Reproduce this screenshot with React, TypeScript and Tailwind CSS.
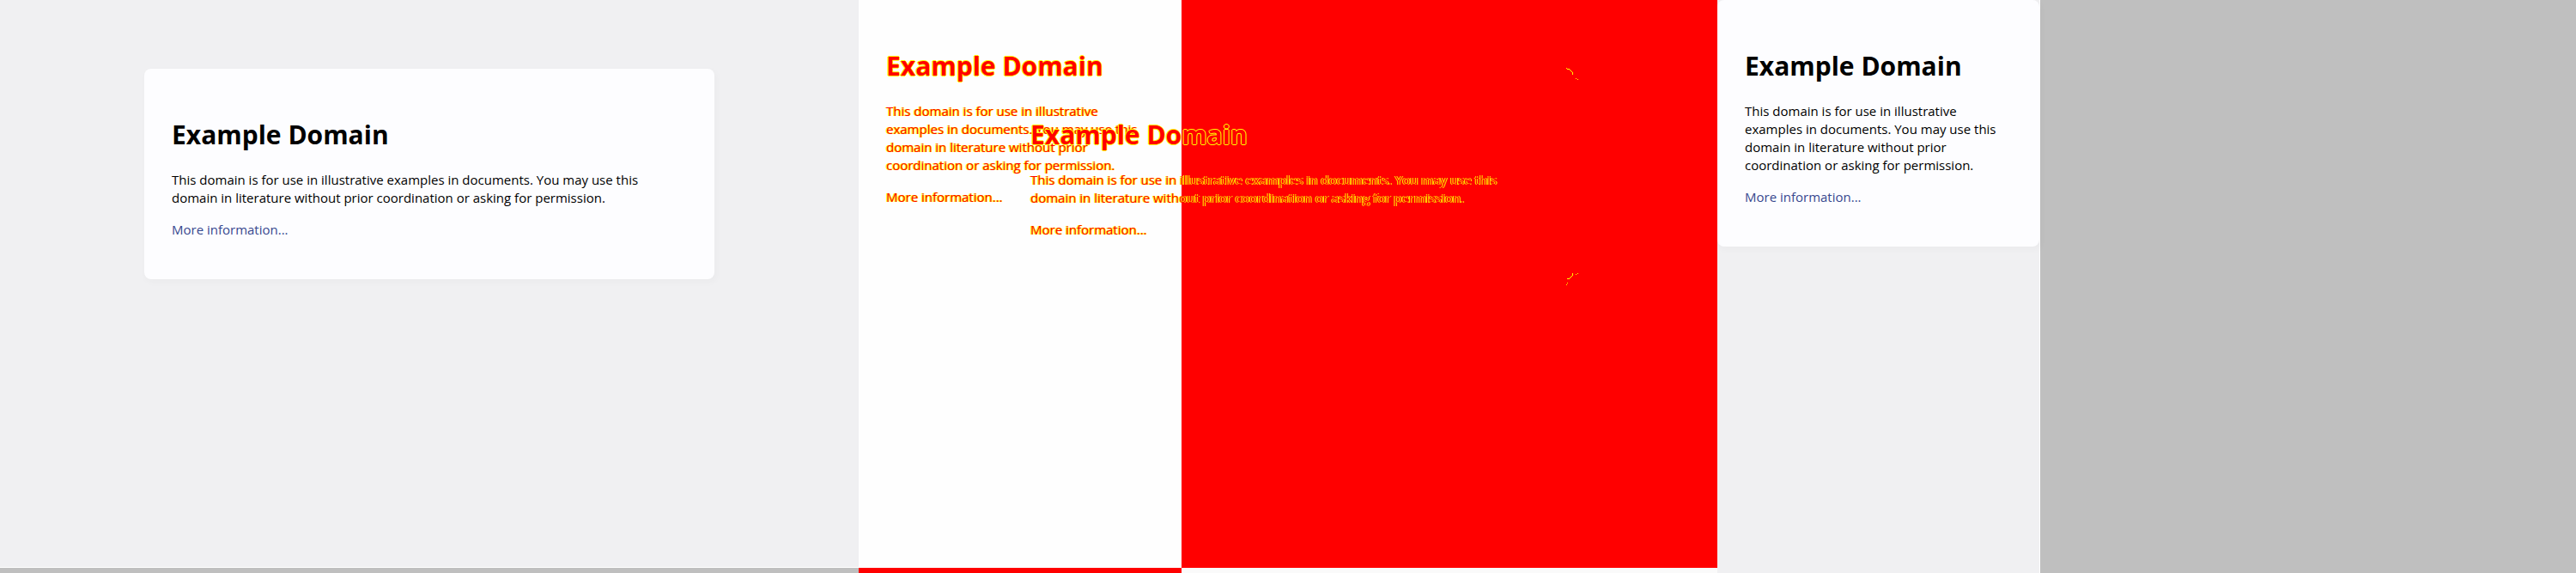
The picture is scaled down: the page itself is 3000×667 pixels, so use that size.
type Variant = "desktop" | "mobile";
type Tone = "plain" | "diff";

const frame: Record<Variant, string> = {
  desktop: "pt-20",
  mobile: "w-[375px] max-w-full",
};

const toneCard: Record<Tone, string> = {
  plain: "bg-[#fdfdff] text-black shadow-[2px_3px_7px_2px_rgba(0,0,0,0.02)]",
  diff: "text-[#ff0000]",
};

const diffHeading =
  "[text-shadow:1px_0_#ffff00,-1px_0_#ffff00,0_1px_#ffff00,0_-1px_#ffff00]";
const diffText = "[text-shadow:1px_0_#ffff00,-1px_0_#ffff00]";

/* Changed pixels along the rounded corners of the card. */
function CornerMarks() {
  return (
    <>
      <svg
        aria-hidden="true"
        viewBox="0 0 14 14"
        shapeRendering="crispEdges"
        className="absolute -top-px -right-1.5 size-3.5 fill-[#ffff00]"
      >
        <path d="M0 0h1v1h-1zM1 1h3v1h-3zM4 2h1v1h-1zM5 3h1v1h-1zM6 4h1v1h-1zM7 5h1v3h-1zM11 12h1v1h-1zM13 13h1v1h-1z" />
      </svg>
      <svg
        aria-hidden="true"
        viewBox="0 0 14 14"
        shapeRendering="crispEdges"
        className="absolute -right-1.5 -bottom-[7px] size-3.5 fill-[#ffff00]"
      >
        <path d="M7 0h1v3h-1zM6 3h1v1h-1zM5 4h1v1h-1zM4 5h1v1h-1zM1 6h3v1h-3zM11 1h1v1h-1zM13 0h1v1h-1zM1 11h1v1h-1zM0 13h1v1h-1z" />
      </svg>
    </>
  );
}

function ExamplePage({ variant, tone }: { variant: Variant; tone: Tone }) {
  const diff = tone === "diff";
  return (
    <div className={frame[variant]}>
      <article
        className={`relative mx-auto w-full max-w-[664px] rounded-lg px-8 pt-[55px] pb-[47px] ${toneCard[tone]}`}
      >
        <h1
          className={`text-[30px] leading-[43px] font-bold ${diff ? diffHeading : ""}`}
        >
          Example Domain
        </h1>
        <p
          className={`mt-[21px] text-[15px] leading-[21px] ${diff ? diffText : ""}`}
        >
          This domain is for use in illustrative examples in documents. You may
          use this domain in literature without prior coordination or asking for
          permission.
        </p>
        <p className="mt-4 text-[15px] leading-[21px]">
          <a
            href="https://www.iana.org/domains/example"
            className={diff ? diffText : "text-[#38488f]"}
          >
            More information...
          </a>
        </p>
        {diff && variant === "desktop" && <CornerMarks />}
      </article>
    </div>
  );
}

export default function App() {
  return (
    <main className="grid min-h-screen grid-cols-3 font-['Open_Sans','Noto_Sans',sans-serif]">
      <section className="flex flex-col bg-[#bfbfbf]">
        <div className="flex-1 border-b border-white bg-[#f0f0f2]">
          <ExamplePage variant="desktop" tone="plain" />
        </div>
        <div className="h-1.5" />
      </section>

      <section className="grid">
        <div className="col-start-1 row-start-1 flex">
          <div className="flex w-[376px] flex-col bg-[#fefefe]">
            <div className="flex-1" />
            <div className="h-1.5 bg-[#ff0000]" />
          </div>
          <div className="flex flex-1 flex-col bg-[#fafafa]">
            <div className="flex-1 bg-[#ff0000]" />
            <div className="h-1.5" />
          </div>
        </div>
        <div className="col-start-1 row-start-1">
          <ExamplePage variant="mobile" tone="diff" />
        </div>
        <div className="col-start-1 row-start-1">
          <ExamplePage variant="desktop" tone="diff" />
        </div>
      </section>

      <section className="flex bg-[#bfbfbf]">
        <div className="border-r border-white bg-[#f0f0f2]">
          <ExamplePage variant="mobile" tone="plain" />
        </div>
      </section>
    </main>
  );
}
